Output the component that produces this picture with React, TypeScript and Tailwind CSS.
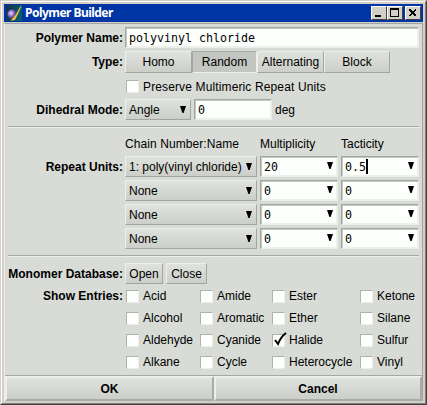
import React from "react";

const raised = "border border-t-[#ecefea] border-l-[#ecefea] border-b-[#a3a5a1] border-r-[#a3a5a1] bg-linear-to-b from-[#dfe2dd] to-[#cbcec9]";
const raisedThick = "border-2 border-t-[#ecefea] border-l-[#ecefea] border-b-[#a9aba7] border-r-[#a9aba7] bg-linear-to-b from-[#dfe2dd] to-[#cbcec9]";
const sunken = "border border-t-[#a3a5a1] border-l-[#a3a5a1] border-b-[#eceeea] border-r-[#eceeea] bg-[#fdfffc] shadow-[inset_1px_1px_0_#c6c8c4,inset_-1px_-1px_0_#eef0ec]";
const mono = "font-['DejaVu_Sans_Mono',monospace] text-[11.63px]";

function Label({ children }: { children: string }) {
  return <div className="w-[118px] shrink-0 pr-[2px] text-right font-bold whitespace-nowrap">{children}</div>;
}

function Arrow() {
  return (
    <svg width="6" height="7" viewBox="0 0 6 7" className="shrink-0">
      <path d="M0 0H6L3.600 7H2.400Z" fill="#000" />
    </svg>
  );
}

function Field({ value, width, arrow, caret }: { value: string; width: string; arrow?: boolean; caret?: boolean }) {
  return (
    <div className={`flex h-[21px] shrink-0 items-center pl-[3px] pr-[3px] ${mono} ${sunken} ${width}`}>
      <span>{value}</span>
      {caret && <span className="h-[15px] w-[2px] bg-black" />}
      {arrow && <span className="mr-[1px] ml-auto pb-[3px]"><Arrow /></span>}
    </div>
  );
}

function Drop({ value, width }: { value: string; width: string }) {
  return (
    <div className={`flex h-[21px] shrink-0 items-center justify-between pl-[3px] pr-[4px] ${raised} ${width}`}>
      <span>{value}</span>
      <Arrow />
    </div>
  );
}

function Check({ label, on, className = "" }: { label: string; on?: boolean; className?: string }) {
  return (
    <div className={`flex items-center gap-[4px] ${className}`}>
      <span className="size-[13px] shrink-0 border border-t-[#b0b2ad] border-l-[#b0b2ad] border-b-[#eceeea] border-r-[#eceeea] bg-[#fdfffc]">
        {on && (
          <svg width="14" height="14" viewBox="0 0 14 14" className="-mt-[3px] overflow-visible">
            <path d="M2 8L5 12C6.500 8 9 4 13 1" fill="none" stroke="#000" strokeWidth="2" />
          </svg>
        )}
      </span>
      <span>{label}</span>
    </div>
  );
}

function Rule({ className = "" }: { className?: string }) {
  return <div className={`h-[2px] shrink-0 border-t border-b border-t-[#a6a8a4] border-b-[#eceeea] ${className}`} />;
}

function AppIcon() {
  return (
    <svg width="16" height="16" viewBox="0 0 16 16">
      <defs>
        <linearGradient id="sky" x2="1" y2="0.300"><stop stopColor="#142d55" /><stop offset="1" stopColor="#075d68" /></linearGradient>
        <radialGradient id="ball" cx=".4" cy=".4"><stop stopColor="#e5d9ff" /><stop offset=".45" stopColor="#a78bd8" /><stop offset="1" stopColor="#574087" /></radialGradient>
      </defs>
      <path d="M0 0H16V16H0Z" fill="url(#sky)" />
      <circle cx="6" cy="9.200" r="4.600" fill="url(#ball)" />
      <path d="M15.500 1L14 2L9.500 10L4.500 15.800L9 15L12 9Z" fill="#eabd48" />
    </svg>
  );
}

function WinButton({ children }: { children: React.ReactNode }) {
  return (
    <span className="h-[14px] w-[16px] border border-t-white border-l-white border-b-[#404040] border-r-[#404040] bg-[#d4d0c8]">
      <svg width="14" height="12" viewBox="0 0 14 12" shapeRendering="crispEdges" fill="none" stroke="#000">{children}</svg>
    </span>
  );
}

const entries = [
  ["Acid", "Amide", "Ester", "Ketone"],
  ["Alcohol", "Aromatic", "Ether", "Silane"],
  ["Aldehyde", "Cyanide", "Halide", "Sulfur"],
  ["Alkane", "Cycle", "Heterocycle", "Vinyl"],
];

export default function App() {
  return (
    <div className="h-[405px] w-[427px] overflow-hidden border border-t-[#d4d0c8] border-l-[#d4d0c8] border-b-[#404040] border-r-[#404040] font-['Liberation_Sans',sans-serif] text-[12px] leading-[14px] text-black">
      <div className="flex h-[403px] flex-col border border-t-white border-l-white border-b-[#808080] border-r-[#808080] bg-[#d4d0c8] p-[2px]">
        <div className="flex h-[18px] shrink-0 items-center bg-[#0035a5] pr-[2px] pl-[2px]">
          <AppIcon />
          <span className="ml-[3px] font-['Noto_Sans',sans-serif] text-[12px] font-bold tracking-[-0.53px] whitespace-nowrap text-white">Polymer Builder</span>
          <div className="ml-auto flex">
            <WinButton><path d="M3 9H9" strokeWidth="2" /></WinButton>
            <WinButton><path d="M2.500 2V9.500H10.500V2M2 2H11" /><path d="M2 2H11" strokeWidth="2" /></WinButton>
            <span className="w-[2px]" />
            <WinButton><path d="M3.500 2.500L10 9M10 2.500L3.500 9" strokeWidth="1.700" /></WinButton>
          </div>
        </div>
        <div className="mt-px flex min-h-0 flex-1 flex-col border-t border-l border-r border-t-[#a3a5a1] border-l-[#eceeea] border-r-[#a3a5a1] bg-[#d8dbd6]">
          <div className="flex flex-col pt-[3px] pr-[3px] pl-[2px]">
            <div className="flex h-[21px] items-center">
              <Label>Polymer Name:</Label>
              <Field value="polyvinyl chloride" width="w-[294px]" />
            </div>
            <div className="mt-[3px] flex h-[22px] items-center">
              <Label>Type:</Label>
              <div className={`flex h-[22px] w-[67px] items-center justify-center ${raised}`}>Homo</div>
              <div className="flex h-[22px] w-[65px] items-center justify-center border border-t-[#a6a8a4] border-l-[#a6a8a4] border-b-[#eceeea] border-r-[#eceeea] bg-[#c4c6c2]">Random</div>
              <div className={`flex h-[22px] w-[67px] items-center justify-center ${raised}`}>Alternating</div>
              <div className={`flex h-[22px] w-[66px] items-center justify-center ${raised}`}>Block</div>
            </div>
            <Check label="Preserve Multimeric Repeat Units" className="mt-[7px] ml-[119px] h-[13px] tracking-[0.13px]" />
            <div className="mt-[6px] flex h-[21px] items-center">
              <Label>Dihedral Mode:</Label>
              <Drop value="Angle" width="w-[66px]" />
              <span className="w-[3px]" />
              <Field value="0" width="w-[78px]" />
              <span className="ml-[3px]">deg</span>
            </div>
            <Rule className="mt-[6px] ml-[1px]" />
            <div className="mt-[8px] flex h-[16px] items-center pl-[118px]">
              <span className="w-[135px] tracking-[0.08px]">Chain Number:Name</span>
              <span className="w-[81px]">Multiplicity</span>
              <span>Tacticity</span>
            </div>
            <div className="mt-[4px] flex flex-col gap-[3px]">
              {[["1: poly(vinyl chloride)", "20", "0.5"], ["None", "0", "0"], ["None", "0", "0"], ["None", "0", "0"]].map((r, i) => (
                <div key={i} className="flex items-center">
                  <Label>{i === 0 ? "Repeat Units:" : ""}</Label>
                  <div className="flex gap-[3px]">
                    <Drop value={r[0]} width="w-[132px]" />
                    <Field value={r[1]} width="w-[78px]" arrow />
                    <Field value={r[2]} width="w-[78px]" arrow caret={i === 0} />
                  </div>
                </div>
              ))}
            </div>
            <Rule className="mt-[6px] ml-[1px]" />
            <div className="mt-[6px] flex h-[21px] items-center">
              <Label>Monomer Database:</Label>
              <div className={`flex h-[21px] w-[38px] items-center justify-center ${raised}`}>Open</div>
              <div className={`ml-[3px] flex h-[21px] w-[41px] items-center justify-center ${raised}`}>Close</div>
            </div>
            <div className="mt-[1px] flex">
              <div className="flex h-[22px] items-center"><Label>Show Entries:</Label></div>
              <div className="ml-px grid grid-cols-[74px_72px_88px_59px] auto-rows-[22px]">
                {entries.flat().map((e) => <Check key={e} label={e} on={e === "Halide"} />)}
              </div>
            </div>
          </div>
          <div className="mt-auto flex h-[26px] shrink-0 border-t border-[#a6a8a4] font-bold">
            <div className={`flex w-[209px] items-center justify-center ${raisedThick}`}>OK</div>
            <div className={`flex flex-1 items-center justify-center ${raisedThick}`}>Cancel</div>
          </div>
        </div>
      </div>
    </div>
  );
}
